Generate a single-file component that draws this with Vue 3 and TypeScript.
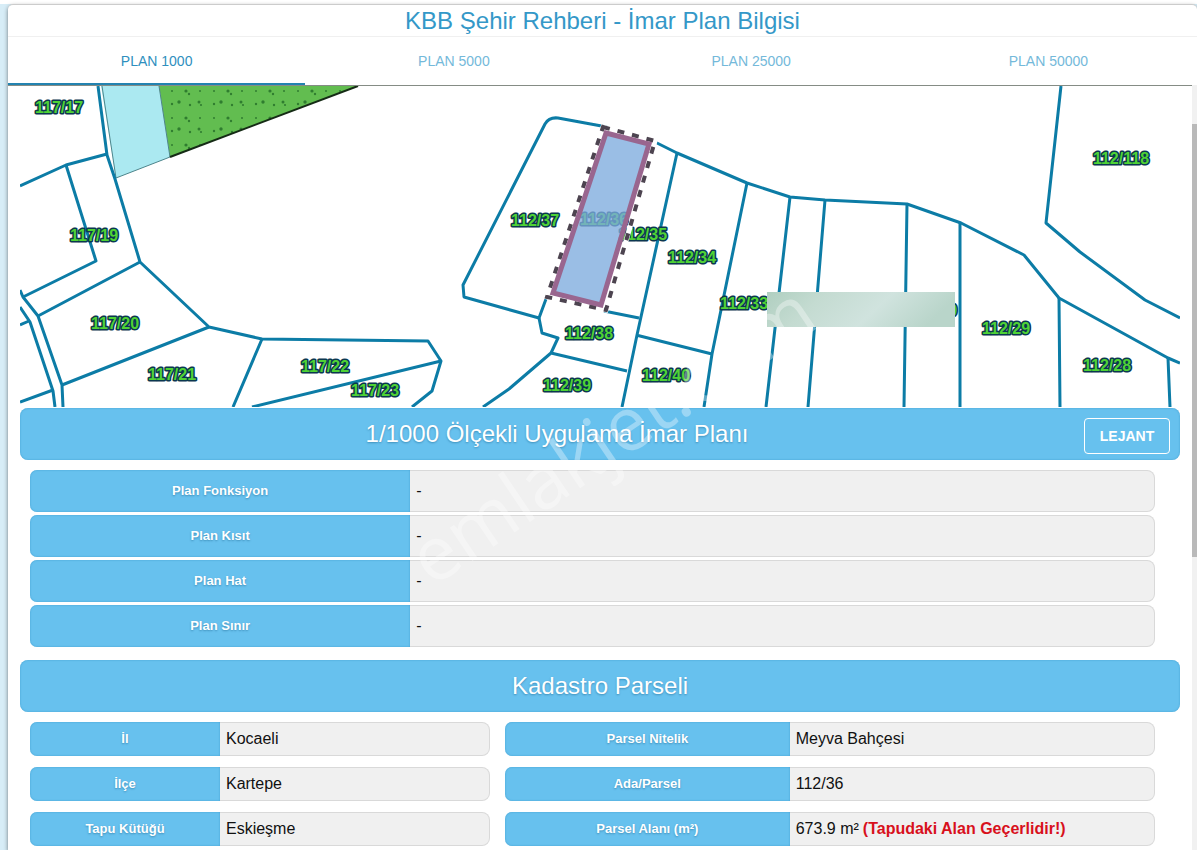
<script setup lang="ts">
import { ref } from 'vue'

interface Field {
  label: string
  value: string
  note?: string
}

interface ParcelLabel {
  text: string
  x: number
  y: number
}

const tabs: string[] = ['PLAN 1000', 'PLAN 5000', 'PLAN 25000', 'PLAN 50000']
const activeTab = ref<number>(0)

const planFields: Field[] = [
  { label: 'Plan Fonksiyon', value: '-' },
  { label: 'Plan Kısıt', value: '-' },
  { label: 'Plan Hat', value: '-' },
  { label: 'Plan Sınır', value: '-' },
]

const locationFields: Field[] = [
  { label: 'İl', value: 'Kocaeli' },
  { label: 'İlçe', value: 'Kartepe' },
  { label: 'Tapu Kütüğü', value: 'Eskieşme' },
]

const parcelFields: Field[] = [
  { label: 'Parsel Nitelik', value: 'Meyva Bahçesi' },
  { label: 'Ada/Parsel', value: '112/36' },
  { label: 'Parsel Alanı (m²)', value: '673.9 m²', note: '(Tapudaki Alan Geçerlidir!)' },
]

const parcelLabels: ParcelLabel[] = [
  { text: '117/17', x: 59, y: 113 },
  { text: '117/19', x: 94, y: 241 },
  { text: '117/20', x: 115, y: 329 },
  { text: '117/21', x: 172, y: 380 },
  { text: '117/22', x: 325, y: 372 },
  { text: '117/23', x: 375, y: 396 },
  { text: '112/37', x: 535, y: 226 },
  { text: '112/36', x: 604, y: 225 },
  { text: '112/35', x: 643, y: 240 },
  { text: '112/34', x: 692, y: 263 },
  { text: '112/33', x: 744, y: 309 },
  { text: '112/38', x: 589, y: 339 },
  { text: '112/39', x: 567, y: 391 },
  { text: '112/40', x: 666, y: 381 },
  { text: '112/30', x: 933, y: 316 },
  { text: '112/29', x: 1006, y: 334 },
  { text: '112/28', x: 1107, y: 371 },
  { text: '112/118', x: 1121, y: 164 },
]
</script>

<template>
  <div class="page">
    <section class="panel">
      <h1 class="title">KBB Şehir Rehberi - İmar Plan Bilgisi</h1>
      <div class="tabs" role="tablist">
        <button
          v-for="(tab, i) in tabs"
          :key="tab"
          type="button"
          role="tab"
          class="tab"
          :class="{ active: i === activeTab }"
          :aria-selected="i === activeTab"
          @click="activeTab = i"
        >{{ tab }}</button>
      </div>

      <div class="body">
        <main class="content">
          <svg class="map" viewBox="20 86 1160 321" role="img" aria-label="Parsel haritası">
            <defs>
              <pattern id="scrub" x="165" y="88" width="42" height="27" patternUnits="userSpaceOnUse">
                <rect width="42" height="27" fill="#62bd50" />
                <g fill="#2f7d2f">
                  <circle cx="7" cy="3" r="1" />
                  <circle cx="21" cy="3" r="1.6" />
                  <circle cx="24" cy="6" r="1.2" />
                  <circle cx="35" cy="3" r="1" />
                  <circle cx="7" cy="16" r="1.2" />
                  <circle cx="14" cy="14" r="1.7" />
                  <circle cx="25" cy="17" r="1.2" />
                  <circle cx="34" cy="14" r="1.5" />
                  <circle cx="36" cy="17" r="1.1" />
                </g>
              </pattern>
              <linearGradient id="mask" x1="0" y1="0" x2="1" y2="0.2">
                <stop offset="0" stop-color="#b0cfc0" />
                <stop offset="0.3" stop-color="#c4dbd1" />
                <stop offset="0.65" stop-color="#d0e3de" />
                <stop offset="1" stop-color="#b9d5ca" />
              </linearGradient>
            </defs>

            <path d="M101 86H159L170 157L116 178Z" fill="#abe9f1" />
            <path d="M159 86H358L170 157Z" fill="url(#scrub)" />
            <path d="M159 86L170 157L116 178L102 86" fill="none" stroke="#4d858c" stroke-width="1" />
            <path d="M170 157L358 86" fill="none" stroke="#152b15" stroke-width="2" />

            <g class="edges">
              <path d="M98 86L107 155L115 179L140 262L209 327L262 339L428 341L441 361L432 391L412 407" />
              <path d="M20 186L66 165L107 154" />
              <path d="M66 165L96 261L23 297" />
              <path d="M20 290L23 297L38 316L62 385L63 407" />
              <path d="M20 307L30 322L53 391L55 407" />
              <path d="M20 325L29 321M38 316L140 262M62 385L209 327M20 402L53 390" />
              <path d="M262 339L233 407M252 407L441 361" />
              <path d="M607 127L558 118Q549 117 545 124L463 285L464 297L539 318L546 299" />
              <path d="M539 318L542 333L558 338L551 353L509 389L483 407M551 353L627 371" />
              <path d="M604 311L639 318M677 153L637 335L622 407M636 335L712 354" />
              <path d="M747 183L712 354L704 407" />
              <path d="M655 142L677 153L747 183L790 197L825 200L907 204L961 223L1024 255L1059 298L1168 358L1180 363" />
              <path d="M790 197L766 407M825 200L808 407M907 204L904 407M960 223V407" />
              <path d="M1059 298L1060 407M1168 358L1170 407" />
              <path d="M1061 86L1046 223L1080 252L1145 300L1180 318" />
            </g>

            <g class="parcel-labels">
              <text v-for="item in parcelLabels" :key="item.text" :x="item.x" :y="item.y">{{ item.text }}</text>
            </g>

            <path d="M603 127L655 141L606 310L547 297Z" fill="none" stroke="#fff" stroke-width="5" />
            <path d="M603 127L655 141L606 310L547 297Z" fill="none" stroke="#4d4450" stroke-width="4" stroke-dasharray="7 8" />
            <path d="M606 133L649 144L601 305L553 293Z" fill="#7eacde" fill-opacity="0.78" stroke="#99668f" stroke-width="5" />
            <rect x="767" y="292" width="188" height="35" fill="url(#mask)" />
          </svg>

          <header class="bar">
            <h2>1/1000 Ölçekli Uygulama İmar Planı</h2>
            <button type="button" class="legend">LEJANT</button>
          </header>
          <dl class="fields plan">
            <div v-for="field in planFields" :key="field.label" class="row">
              <dt>{{ field.label }}</dt>
              <dd>{{ field.value }}</dd>
            </div>
          </dl>

          <header class="bar">
            <h2>Kadastro Parseli</h2>
          </header>
          <div class="cadastre">
            <dl class="fields location">
              <div v-for="field in locationFields" :key="field.label" class="row">
                <dt>{{ field.label }}</dt>
                <dd>{{ field.value }}</dd>
              </div>
            </dl>
            <dl class="fields parcel">
              <div v-for="field in parcelFields" :key="field.label" class="row">
                <dt>{{ field.label }}</dt>
                <dd>{{ field.value }} <strong v-if="field.note">{{ field.note }}</strong></dd>
              </div>
            </dl>
          </div>

          <svg class="watermark" viewBox="20 86 1160 764" aria-hidden="true">
            <text transform="translate(432 588) rotate(-34)">emlakjet.com</text>
          </svg>
        </main>
        <div class="track"><div class="thumb"></div></div>
      </div>
    </section>
  </div>
</template>

<style>
body {
  margin: 0;
  background: #fff;
}
</style>

<style scoped>
* {
  box-sizing: border-box;
}

.page {
  height: 100vh;
  padding: 4px 0 0 8px;
  overflow: hidden;
  background: linear-gradient(#fff, #fff) top / 100% 4px no-repeat, #d7edf7;
  font-family: "Liberation Sans", Arial, sans-serif;
}

.panel {
  display: flex;
  flex-direction: column;
  height: 100%;
  border-top: 1px solid #ccc;
  border-radius: 5px 5px 0 0;
  background: #fff;
  box-shadow: 0 2px 4px rgba(0, 0, 0, 0.5);
}

.title {
  margin: 0;
  height: 32px;
  border-bottom: 1px solid #f0f0f0;
  color: #3498c8;
  font-size: 24px;
  font-weight: 400;
  line-height: 32px;
  text-align: center;
}

.tabs {
  display: flex;
  height: 48px;
}

.tab {
  flex: 1;
  padding: 2px 0 0;
  border: 0;
  border-bottom: 2px solid transparent;
  background: none;
  color: #74b9da;
  font: 14px "Liberation Sans", Arial, sans-serif;
}

.tab.active {
  border-bottom-color: #2383b0;
  color: #2f8fbe;
}

.body {
  display: flex;
  flex: 1;
  min-height: 0;
}

.content {
  position: relative;
  flex: 1;
  padding: 0 12px;
  border-top: 1px solid #858c85;
  overflow: hidden;
}

.track {
  display: flex;
  flex-direction: column;
  width: 5px;
  background: #f1f1f1;
}

.track::before {
  content: "";
  flex: 39;
}

.thumb {
  flex: 433;
  background: #b9b9b9;
}

.track::after {
  content: "";
  flex: 293;
}

.map {
  display: block;
  width: 100%;
  margin-bottom: 1px;
}

.edges path {
  fill: none;
  stroke: #0c7ca6;
  stroke-width: 3;
  stroke-linejoin: round;
}

.parcel-labels text {
  fill: #4fd235;
  stroke: #0b3750;
  stroke-width: 3;
  stroke-linejoin: round;
  paint-order: stroke;
  font-size: 16px;
  font-weight: 700;
  text-anchor: middle;
}

.bar {
  display: flex;
  align-items: center;
  height: 52px;
  padding: 0 10px;
  border-radius: 8px;
  background: #67c1ee;
  box-shadow: inset 0 0 2px #3f9dcd;
  color: #fff;
}

.bar h2 {
  flex: 1;
  margin: 0;
  font-size: 24px;
  font-weight: 400;
  text-align: center;
  text-shadow: 0 1px 2px rgba(0, 70, 110, 0.4);
}

.legend {
  width: 86px;
  height: 36px;
  margin-top: 4px;
  padding: 0;
  border: 1px solid #fff;
  border-radius: 4px;
  background: transparent;
  color: #fff;
  font: 700 14px "Liberation Sans", Arial, sans-serif;
}

.fields {
  display: flex;
  flex-direction: column;
  margin: 0;
}

.plan {
  gap: 3px;
  padding: 10px 25px 13px 10px;
}

.row {
  display: flex;
  height: 42px;
}

.cadastre {
  display: grid;
  grid-template-columns: 460fr 650fr;
  column-gap: 15px;
  padding: 10px 25px 11px 10px;
}

.cadastre .fields {
  gap: 11px;
}

.cadastre .row {
  height: 34px;
}

dt {
  display: flex;
  align-items: center;
  justify-content: center;
  padding-bottom: 2px;
  border-radius: 7px 0 0 7px;
  background: #67c1ee;
  box-shadow: inset 0 0 2px #3f9dcd;
  color: #fff;
  font-size: 13px;
  font-weight: 700;
  text-shadow: 0 1px 2px rgba(0, 70, 110, 0.4);
}

.plan dt {
  width: 33.8%;
}

.location dt {
  width: 41.3%;
}

.parcel dt {
  width: 43.8%;
}

dd {
  flex: 1;
  display: flex;
  align-items: center;
  gap: 4px;
  margin: 0;
  padding: 0 6px;
  border: 1px solid #d9d9d9;
  border-left: 0;
  border-radius: 0 8px 8px 0;
  background: #f0f0f0;
  color: #111;
  font-size: 16px;
}

dd strong {
  color: #d8101c;
}

.watermark {
  position: absolute;
  top: 0;
  left: 12px;
  width: calc(100% - 24px);
  pointer-events: none;
}

.watermark text {
  fill: #fff;
  fill-opacity: 0.35;
  font-family: "Open Sans", sans-serif;
  font-size: 75px;
}
</style>
